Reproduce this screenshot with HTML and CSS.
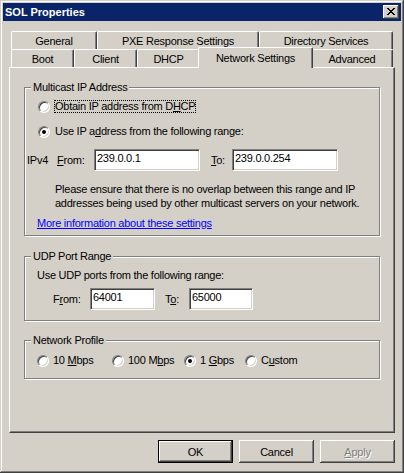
FILE: index.html
```html
<!DOCTYPE html>
<html lang="en">
<head>
  <meta charset="UTF-8">
  <meta name="viewport" content="width=device-width, initial-scale=1.0">
  <title>SOL Properties</title>
  <link rel="stylesheet" href="styles.css">
</head>
<body>
  <div class="window">
    <div class="titlebar">
      <span class="title">SOL Properties</span>
      <span class="close-btn">
        <svg width="8" height="7" viewBox="0 0 8 7"><path d="M0 0h2v1h-2zM6 0h2v1h-2zM1 1h2v1h-2zM5 1h2v1h-2zM2 2h4v1h-4zM3 3h2v1h-2zM2 4h4v1h-4zM1 5h2v1h-2zM5 5h2v1h-2zM0 6h2v1h-2zM6 6h2v1h-2z" fill="#000"/></svg>
      </span>
    </div>

    <div class="dialog">
      <div class="tabs">
        <div class="tab-row">
          <div class="tab tab-general">General</div>
          <div class="tab tab-pxe">PXE Response Settings</div>
          <div class="tab tab-dir">Directory Services</div>
        </div>
        <div class="tab-row">
          <div class="tab tab-boot">Boot</div>
          <div class="tab tab-client">Client</div>
          <div class="tab tab-dhcp">DHCP</div>
          <div class="tab tab-network selected">Network Settings</div>
          <div class="tab tab-advanced">Advanced</div>
        </div>
      </div>

      <div class="panel">
        <div class="group group-multicast">
          <div class="group-title">Multicast IP Address</div>
          <label class="option first"><span class="radio"></span><span class="caption focus">Obtain IP address from D<u>H</u>CP</span></label>
          <label class="option second"><span class="radio checked"></span><span class="caption">Use IP a<u>d</u>dress from the following range:</span></label>
          <div class="range ipv4">
            <span class="lbl lbl-ipv4">IPv4</span>
            <span class="lbl lbl-from"><u>F</u>rom:</span>
            <input class="edit edit-ip" value="239.0.0.1">
            <span class="lbl lbl-to"><u>T</u>o:</span>
            <input class="edit edit-ip" value="239.0.0.254">
          </div>
          <p class="note">Please ensure that there is no overlap between this range and IP<br>addresses being used by other multicast servers on your network.</p>
          <a class="more" href="#">More information about these settings</a>
        </div>

        <div class="group group-udp">
          <div class="group-title">UDP Port Range</div>
          <div class="intro">Use UDP ports from the following range:</div>
          <div class="range udp">
            <span class="lbl lbl-ufrom">F<u>r</u>om:</span>
            <input class="edit edit-port" value="64001">
            <span class="lbl lbl-uto">T<u>o</u>:</span>
            <input class="edit edit-port2" value="65000">
          </div>
        </div>

        <div class="group group-profile">
          <div class="group-title">Network Profile</div>
          <div class="profile-row">
            <label class="option opt-10"><span class="radio"></span><span>10 <u>M</u>bps</span></label>
            <label class="option opt-100"><span class="radio"></span><span>100 M<u>b</u>ps</span></label>
            <label class="option opt-1g"><span class="radio checked"></span><span>1 <u>G</u>bps</span></label>
            <label class="option"><span class="radio"></span><span>C<u>u</u>stom</span></label>
          </div>
        </div>
      </div>

      <div class="buttons">
        <button class="btn default">OK</button>
        <button class="btn">Cancel</button>
        <button class="btn" disabled><u>A</u>pply</button>
      </div>
    </div>
  </div>
</body>
</html>
```

FILE: styles.css
```css
body {
  margin: 0;
  font-family: "Liberation Sans", Arial, sans-serif;
  font-size: 11px;
  letter-spacing: -0.25px;
  color: #000;
  background: #d4d0c8;
}

.window {
  width: 404px;
  height: 473px;
  box-sizing: border-box;
  padding: 3px;
  background: #d4d0c8;
  box-shadow: inset -1px -1px #404040, inset 1px 1px #d4d0c8, inset -2px -2px #808080, inset 2px 2px #fff;
}

/* title bar */
.titlebar {
  height: 18px;
  background: #0a246a;
  display: flex;
  align-items: center;
  justify-content: space-between;
  padding: 0 2px;
}
.title {
  color: #fff;
  font-weight: bold;
  letter-spacing: 0;
  line-height: 18px;
}
.close-btn {
  width: 16px;
  height: 14px;
  box-sizing: border-box;
  padding-bottom: 1px;
  background: #d4d0c8;
  box-shadow: inset -1px -1px #404040, inset 1px 1px #fff, inset -2px -2px #808080;
  display: flex;
  align-items: center;
  justify-content: center;
}
.close-btn svg {
  display: block;
}

.dialog {
  padding: 10px 6px 0;
}

/* tabs */
.tabs {
  padding-left: 2px;
}
.tab-row {
  display: flex;
  height: 18px;
}
.tab {
  box-sizing: border-box;
  height: 18px;
  padding-top: 1px;
  line-height: 16px;
  text-align: center;
  white-space: nowrap;
  background: #d4d0c8;
  border-top: 1px solid #fff;
  border-left: 1px solid #fff;
  border-right: 1px solid #404040;
  border-radius: 2px 2px 0 0;
  box-shadow: inset -1px 0 #808080;
}
.tab-general { width: 86px; }
.tab-pxe { width: 162px; }
.tab-dir { width: 134px; }
.tab-boot { width: 63px; }
.tab-client { width: 63px; }
.tab-dhcp { width: 63px; }
.tab-network { width: 111px; }
.tab-advanced { width: 82px; }

.tab.selected {
  width: 115px;
  height: 21px;
  margin: -2px -2px -1px;
  padding-top: 2px;
  position: relative;
  z-index: 1;
}

/* page */
.panel {
  box-sizing: border-box;
  height: 366px;
  border: 1px solid;
  border-color: #fff #404040 #404040 #fff;
  box-shadow: inset -1px -1px #808080;
  padding-left: 14px;
}

.group {
  box-sizing: border-box;
  width: 356px;
  border: 1px solid #808080;
  box-shadow: inset 1px 1px #fff, 1px 1px #fff;
}
.group-title {
  display: table;
  margin: -7px 0 0 6px;
  padding: 0 2px;
  line-height: 13px;
  background: #d4d0c8;
}
.group-multicast {
  margin-top: 19px;
  height: 149px;
}
.group-udp {
  margin-top: 20px;
  height: 65px;
}
.group-profile {
  margin-top: 19px;
  height: 39px;
}

/* radio options */
.option {
  display: flex;
  align-items: center;
  gap: 4px;
  height: 13px;
  line-height: 13px;
  white-space: nowrap;
}
.group-multicast .option {
  margin-left: 13px;
}
.option.first {
  margin-top: 6px;
}
.option.second {
  margin-top: 12px;
}
.caption {
  padding: 0 1px;
}
.caption.focus {
  outline: 1px dotted #000;
  outline-offset: -1px;
}
.radio {
  width: 12px;
  height: 12px;
  box-sizing: border-box;
  border-radius: 50%;
  background: #fff;
  border: 1px solid;
  border-color: #808080 #fff #fff #808080;
  box-shadow: inset 1px 1px #404040, inset -1px -1px #d4d0c8;
  display: flex;
  align-items: center;
  justify-content: center;
}
.radio.checked::after {
  content: "";
  width: 4px;
  height: 4px;
  border-radius: 50%;
  background: #000;
}

/* edit rows */
.range {
  display: flex;
  align-items: center;
  height: 22px;
}
.lbl {
  line-height: 13px;
  white-space: nowrap;
}
.ipv4 {
  margin: 11px 0 0 2px;
}
.lbl-ipv4 { width: 30px; }
.lbl-from { width: 37px; }
.lbl-to { width: 21px; margin-left: 11px; }
.edit-ip { width: 106px; }

.udp {
  margin: 6px 0 0 28px;
}
.lbl-ufrom { width: 37px; }
.lbl-uto { width: 24px; margin-left: 10px; }
.edit-port { width: 65px; }
.edit-port2 { width: 64px; }

.edit {
  box-sizing: border-box;
  height: 22px;
  margin: 0;
  padding: 1px 2px 5px;
  font: inherit;
  letter-spacing: inherit;
  line-height: 13px;
  color: #000;
  background: #fff;
  border: 1px solid;
  border-color: #808080 #fff #fff #808080;
  box-shadow: inset 1px 1px #404040, inset -1px -1px #d4d0c8;
  outline: none;
}

.note {
  margin: 11px 0 0 30px;
  line-height: 14px;
  white-space: nowrap;
}
.more {
  display: block;
  width: fit-content;
  margin: 7px 0 0 12px;
  line-height: 13px;
  color: #0000ff;
  text-decoration: underline;
}

.intro {
  margin: 6px 0 0 12px;
  line-height: 13px;
}

.profile-row {
  display: flex;
  margin: 7px 0 0 12px;
  height: 13px;
}
.opt-10 { width: 75px; }
.opt-100 { width: 72px; }
.opt-1g { width: 61px; }

/* dialog buttons */
.buttons {
  display: flex;
  justify-content: flex-end;
  gap: 6px;
  margin-top: 7px;
}
.btn {
  width: 75px;
  height: 23px;
  box-sizing: border-box;
  padding: 0;
  font: inherit;
  letter-spacing: inherit;
  color: #000;
  background: #d4d0c8;
  border: none;
  box-shadow: inset -1px -1px #404040, inset 1px 1px #fff, inset -2px -2px #808080, inset 2px 2px #d4d0c8;
}
.btn.default {
  border: 1px solid #000;
}
.btn:disabled {
  color: #808080;
  text-shadow: 1px 1px #fff;
}
```
